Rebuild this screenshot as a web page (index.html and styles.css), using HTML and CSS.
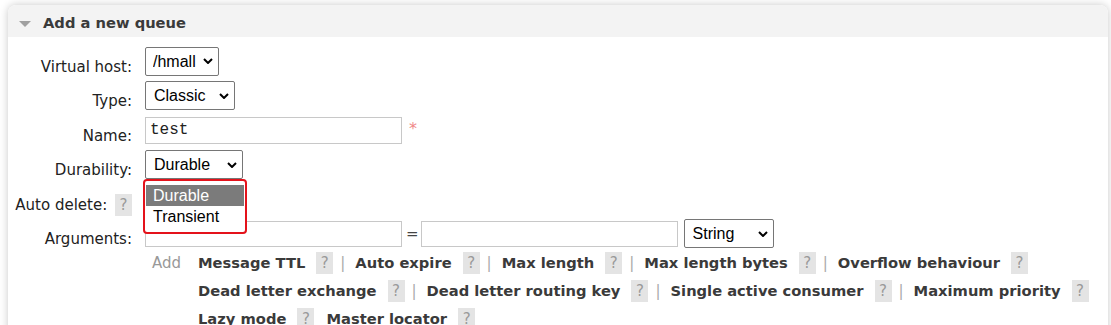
FILE: index.html
```html
<!DOCTYPE html>
<html lang="en">
<head>
    <meta charset="UTF-8">
    <title>Add a new queue</title>
    <link rel="stylesheet" href="styles.css">
</head>
<body>
    <div class="section">
        <h2 class="section-title"><span class="arrow"></span>Add a new queue</h2>

        <form class="queue-form">
            <label class="field-label" for="vhost">Virtual host:</label>
            <div class="field">
                <select id="vhost" class="sel sel-vhost"><option>/hmall</option></select>
            </div>

            <label class="field-label" for="type">Type:</label>
            <div class="field">
                <select id="type" class="sel sel-type"><option>Classic</option></select>
            </div>

            <label class="field-label" for="name">Name:</label>
            <div class="field">
                <input type="text" id="name" class="txt txt-name" value="test">
                <span class="required">*</span>
            </div>

            <label class="field-label" for="durable">Durability:</label>
            <div class="field dropdown-wrap">
                <select id="durable" class="sel sel-durable"><option>Durable</option></select>
                <div class="dropdown-open">
                    <ul class="options">
                        <li class="selected">Durable</li>
                        <li>Transient</li>
                    </ul>
                </div>
            </div>

            <label class="field-label" for="autodelete">Auto delete: <span class="help">?</span></label>
            <div class="field">
                <select id="autodelete" class="sel sel-durable"><option>No</option></select>
            </div>

            <label class="field-label" for="arg-key">Arguments:</label>
            <div class="field">
                <input type="text" id="arg-key" class="txt txt-arg">
                <span class="equals">=</span>
                <input type="text" class="txt txt-arg">
                <select class="sel sel-type sel-string"><option>String</option></select>
            </div>
        </form>

        <div class="arg-links">
            <span class="add">Add</span>
            <div class="link-lines">
                <div class="link-line">
                    <b>Message TTL</b><span class="help">?</span><span class="sep">|</span>
                    <b>Auto expire</b><span class="help">?</span><span class="sep">|</span>
                    <b>Max length</b><span class="help">?</span><span class="sep">|</span>
                    <b>Max length bytes</b><span class="help">?</span><span class="sep">|</span>
                    <b>Overflow behaviour</b><span class="help">?</span>
                </div>
                <div class="link-line">
                    <b>Dead letter exchange</b><span class="help">?</span><span class="sep">|</span>
                    <b>Dead letter routing key</b><span class="help">?</span><span class="sep">|</span>
                    <b>Single active consumer</b><span class="help">?</span><span class="sep">|</span>
                    <b>Maximum priority</b><span class="help">?</span>
                </div>
                <div class="link-line">
                    <b>Lazy mode</b><span class="help">?</span>
                    <b class="next">Master locator</b><span class="help">?</span>
                </div>
            </div>
        </div>
    </div>
</body>
</html>
```
FILE: styles.css
```css
body {
    margin: 0;
    padding: 5px 3px 0 8px;
    background-color: white;
    font-family: "DejaVu Sans", Verdana, sans-serif;
    font-size: 15px;
    color: #222;
    overflow: hidden;
}
.section {
    width: 1100px;
    height: 340px;
    border-radius: 8px;
    box-shadow: 0 0 8px rgba(0, 0, 0, 0.22);
    background-color: white;
}
.section-title {
    margin: 0;
    height: 32px;
    line-height: 35px;
    padding-left: 11px;
    background-color: #f3f3f3;
    border-radius: 8px 8px 0 0;
    font-size: 14.7px;
    color: #3a3a3a;
}
.arrow {
    display: inline-block;
    width: 0;
    height: 0;
    border-left: 6px solid transparent;
    border-right: 6px solid transparent;
    border-top: 6px solid #a0a0a0;
    margin-right: 12px;
    vertical-align: 1px;
}
.queue-form {
    display: grid;
    grid-template-columns: 124px auto;
    grid-auto-rows: 34.5px;
    column-gap: 13px;
    margin-top: 7px;
}
.field-label {
    text-align: right;
    align-self: center;
    white-space: nowrap;
    padding-top: 11px;
}
.field-label .help {
    margin: 0 0 0 3px;
}
.field {
    display: flex;
    align-items: center;
}
.sel {
    -webkit-appearance: none;
    appearance: none;
    height: 29px;
    border: 1px solid #767676;
    border-radius: 2px;
    background-color: white;
    background-image: url("data:image/svg+xml,%3Csvg xmlns='http://www.w3.org/2000/svg' width='10' height='6' viewBox='0 0 10 6'%3E%3Cpath d='M1 1l4 4 4-4' fill='none' stroke='%23000' stroke-width='2'/%3E%3C/svg%3E");
    background-repeat: no-repeat;
    background-position: right 5px center;
    font-family: "Liberation Sans", Arial, sans-serif;
    font-size: 16px;
    color: black;
    padding: 0 0 0 7px;
}
.sel-vhost {
    width: 74px;
}
.sel-type {
    width: 90px;
    padding-left: 8px;
}
.sel-durable {
    width: 98px;
    padding-left: 8px;
}
.txt {
    height: 27px;
    box-sizing: border-box;
    border: 1px solid #c8c8c8;
    padding: 0 4px;
    font-family: "Liberation Mono", "Courier New", monospace;
    font-size: 16px;
    color: #222;
}
.txt-name {
    width: 257px;
}
.txt-arg {
    width: 257px;
    height: 26px;
}
.required {
    color: #f08888;
    margin-left: 7px;
    font-size: 16px;
    margin-top: -4px;
}
.equals {
    margin: 0 2px 0 4px;
    color: #444;
}
.sel-string {
    margin-left: 6px;
}
.dropdown-wrap {
    position: relative;
}
.dropdown-open {
    position: absolute;
    left: -2px;
    top: 31px;
    width: 100px;
    border: 2px solid #e4121b;
    border-radius: 4px;
    background-color: white;
    padding: 4px 0 5px 0;
    z-index: 2;
}
.options {
    list-style: none;
    margin: 0 1px;
    padding: 0;
    font-family: "Liberation Sans", Arial, sans-serif;
    font-size: 16px;
    color: black;
    line-height: 21px;
}
.options li {
    padding-left: 7px;
}
.options .selected {
    background-color: #7b7b7b;
    color: white;
}
.arg-links {
    display: flex;
    margin: -2px 0 0 144px;
}
.add {
    color: #999;
    line-height: 28px;
    width: 46px;
}
.link-line {
    height: 28px;
    line-height: 28px;
    display: flex;
    align-items: center;
    white-space: nowrap;
    color: #3a3a3a;
}
.link-line b {
    font-size: 14.7px;
}
.help {
    display: inline-block;
    width: 17px;
    height: 22px;
    line-height: 22px;
    background-color: #e4e4e4;
    color: #999;
    text-align: center;
    font-weight: normal;
    font-size: 15px;
}
.link-line .help {
    margin-left: 11px;
}
.sep {
    color: #aaa;
    margin: 0 10px 0 7px;
}
.link-line .next {
    margin-left: 12px;
}
```
